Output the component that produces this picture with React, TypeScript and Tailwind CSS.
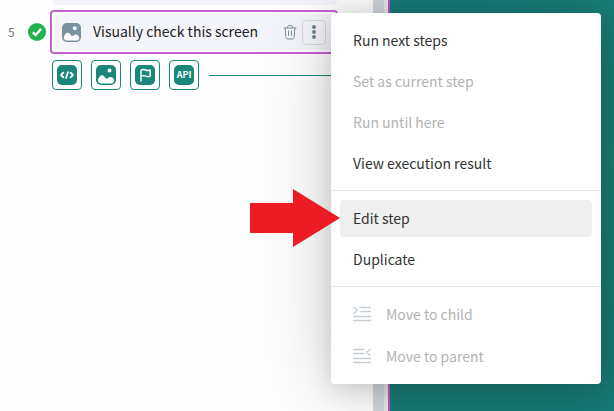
import type { ReactNode } from "react";

type IconProps = { className?: string };

function CheckCircle() {
  return (
    <svg viewBox="0 0 18 18" className="h-[18px] w-[18px] shrink-0" role="img" aria-label="Passed">
      <circle cx="9" cy="9" r="9" fill="#22b14c" />
      <path d="M4.8 9.4 7.6 12 13.2 5.8" fill="none" stroke="#fff" strokeWidth="2.4" />
    </svg>
  );
}

function ImageIcon({ className }: IconProps) {
  return (
    <svg viewBox="0 0 20 20" className={className} aria-hidden="true">
      <rect width="20" height="20" rx="5" fill="currentColor" />
      <circle cx="13.5" cy="5.5" r="2" fill="#fff" />
      <path
        d="M1.8 15.2C2.6 12.2 4.2 10.2 6.2 10.2c2.4 0 2.8 3.4 4.6 3.4 1.4 0 2-1.6 3.6-1.6 2 0 3.4 1.6 3.9 3.4-.4 1.9-1.6 3.1-3.6 3.1H5.4c-2 0-3.3-1.2-3.6-3.3Z"
        fill="#fff"
      />
    </svg>
  );
}

function CodeIcon({ className }: IconProps) {
  return (
    <svg viewBox="0 0 20 20" className={className} aria-hidden="true">
      <rect width="20" height="20" rx="5" fill="currentColor" />
      <path
        d="M6.4 7.6 4 10l2.4 2.4M13.6 7.6 16 10l-2.4 2.4M11 7.2l-2 5.8"
        fill="none"
        stroke="#fff"
        strokeWidth="1.8"
        strokeLinecap="round"
        strokeLinejoin="round"
      />
    </svg>
  );
}

function FlagIcon({ className }: IconProps) {
  return (
    <svg viewBox="0 0 20 20" className={className} aria-hidden="true">
      <rect width="20" height="20" rx="5" fill="currentColor" />
      <path
        d="M6 16V5.2c2-1.2 3.4-.9 4.8-.2 1.4.6 2.6.8 4.4 0v6.2c-1.8.8-3 .6-4.4 0-1.4-.7-2.8-1-4.8.2"
        fill="none"
        stroke="#fff"
        strokeWidth="1.4"
        strokeLinecap="round"
        strokeLinejoin="round"
      />
    </svg>
  );
}

function TrashIcon() {
  return (
    <svg
      viewBox="0 0 14 16"
      className="h-4 w-3.5"
      fill="none"
      stroke="#7d919d"
      strokeLinecap="round"
      strokeLinejoin="round"
      aria-hidden="true"
    >
      <path d="M1 4h12M4.4 3.7C4.5 2 5 1.5 7 1.5s2.5.5 2.6 2.2M2.2 4.2l.5 8.4c.1 1.7.9 2.4 2.3 2.4h4c1.4 0 2.2-.7 2.3-2.4l.5-8.4" />
      <path d="M5.5 7v4.5M8.5 7v4.5" />
    </svg>
  );
}

function KebabIcon() {
  return (
    <svg viewBox="0 0 4 16" className="h-4 w-1" fill="#6c8390" aria-hidden="true">
      <circle cx="2" cy="3" r="2" />
      <circle cx="2" cy="8" r="2" />
      <circle cx="2" cy="13" r="2" />
    </svg>
  );
}

function ChildIcon() {
  return (
    <svg
      viewBox="0 0 18 16"
      className="h-4 w-[18px]"
      fill="none"
      stroke="#c5ced4"
      strokeWidth="1.4"
      strokeLinecap="round"
      strokeLinejoin="round"
      aria-hidden="true"
    >
      <path d="M7 1.5h10.3M8 5.5h9.3M.7 10.5h16.6M.7 14.5h16.6M1 1.5l3.5 2.8L1 7.2" />
    </svg>
  );
}

function ParentIcon() {
  return (
    <svg
      viewBox="0 0 18 16"
      className="h-4 w-[18px]"
      fill="none"
      stroke="#c5ced4"
      strokeWidth="1.4"
      strokeLinecap="round"
      strokeLinejoin="round"
      aria-hidden="true"
    >
      <path d="M.7 1.5H11M.7 5.5H11M.7 10.5h16.6M.7 14.5h16.6M17 1.5l-3.5 2.8L17 7.2" />
    </svg>
  );
}

function AddButton({ label, children }: { label: string; children: ReactNode }) {
  return (
    <button
      type="button"
      aria-label={label}
      className="flex h-[30px] w-[30px] shrink-0 items-center justify-center rounded border border-[#1b877b] bg-white text-[#1b877b]"
    >
      {children}
    </button>
  );
}

type ItemProps = { children: ReactNode; icon?: ReactNode; disabled?: boolean; active?: boolean };

function MenuItem({ children, icon, disabled, active }: ItemProps) {
  return (
    <button
      type="button"
      role="menuitem"
      disabled={disabled}
      className={`flex h-[37px] w-full items-center gap-[15px] rounded px-[13px] pb-px text-left ${
        active ? "bg-[#efefef]" : ""
      } ${disabled ? "text-[#b3b3b3]" : "text-[#333]"}`}
    >
      {icon}
      <span>{children}</span>
    </button>
  );
}

function Divider() {
  return <hr className="mt-2 mb-[9px] border-[#e6e6e6]" />;
}

export default function App() {
  return (
    <main className="relative flex min-h-screen overflow-hidden bg-[#fefefe] font-['Noto_Sans_CJK_SC',sans-serif] text-sm leading-5">
      <section className="w-[373px] shrink-0" aria-label="Test steps">
        <div className="ml-[53px] mr-9 h-[5px] rounded-b-sm bg-[#f4f5fb]" />
        <div className="mt-[5px] flex items-center pl-2 pr-[35px]">
          <span className="w-5 shrink-0 text-xs text-[#777]">5</span>
          <CheckCircle />
          <div className="ml-1 flex h-11 flex-1 items-center rounded border-2 border-[#c462cf] bg-white p-0.5">
            <div className="flex h-full flex-1 items-center bg-[#f4f5fb] px-2">
              <ImageIcon className="h-[19px] w-[19px] shrink-0 text-[#7a919e]" />
              <span className="ml-3 flex-1 whitespace-nowrap pb-0.5 text-[#222]">Visually check this screen</span>
              <button type="button" aria-label="Delete step">
                <TrashIcon />
              </button>
              <button
                type="button"
                aria-label="More actions"
                className="ml-[5px] flex h-[25px] w-6 items-center justify-center rounded border border-[#d7dade]"
              >
                <KebabIcon />
              </button>
            </div>
          </div>
        </div>
        <div className="mt-1.5 flex items-center gap-[9px] pl-[52px]">
          <AddButton label="Add script step">
            <CodeIcon className="h-5 w-5" />
          </AddButton>
          <AddButton label="Add visual check">
            <ImageIcon className="h-5 w-5" />
          </AddButton>
          <AddButton label="Add checkpoint">
            <FlagIcon className="h-5 w-5" />
          </AddButton>
          <AddButton label="Add API step">
            <span className="flex h-5 w-5 items-center justify-center rounded-[5px] bg-[#1b877b] text-[9px] font-bold text-white">
              API
            </span>
          </AddButton>
          <div className="mr-9 ml-px h-px flex-1 bg-[#1b877b]" />
        </div>
      </section>
      <div className="w-[11px] shrink-0 bg-[#d0d7dc]" />
      <div className="w-1 shrink-0 bg-[#e8e8e8]" />
      <div className="flex-1 border-l-2 border-[#b95cc4] bg-linear-160 from-[#197c7a] via-[#1b8070] to-[#187a75]" />

      <div
        role="menu"
        aria-label="Step actions"
        className="absolute top-[13px] left-[331px] w-[270px] rounded bg-white p-[9px] shadow-[0_4px_24px_rgba(0,0,0,0.16),0_6px_80px_rgba(0,0,0,0.18)]"
      >
        <div className="flex flex-col gap-1">
          <MenuItem>Run next steps</MenuItem>
          <MenuItem disabled>Set as current step</MenuItem>
          <MenuItem disabled>Run until here</MenuItem>
          <MenuItem>View execution result</MenuItem>
        </div>
        <div className="-mx-[9px]">
          <Divider />
        </div>
        <div className="flex flex-col gap-1">
          <MenuItem active>Edit step</MenuItem>
          <MenuItem>Duplicate</MenuItem>
        </div>
        <div className="-mx-[9px]">
          <Divider />
        </div>
        <div className="flex flex-col gap-[5px]">
          <MenuItem disabled icon={<ChildIcon />}>
            Move to child
          </MenuItem>
          <MenuItem disabled icon={<ParentIcon />}>
            Move to parent
          </MenuItem>
        </div>
      </div>

      <svg viewBox="0 0 90 58" className="absolute top-[189px] left-[250px] h-[58px] w-[90px]" aria-hidden="true">
        <path d="M0 14h43V0l47 29-47 29V44H0Z" fill="#ed1c24" />
      </svg>
    </main>
  );
}
